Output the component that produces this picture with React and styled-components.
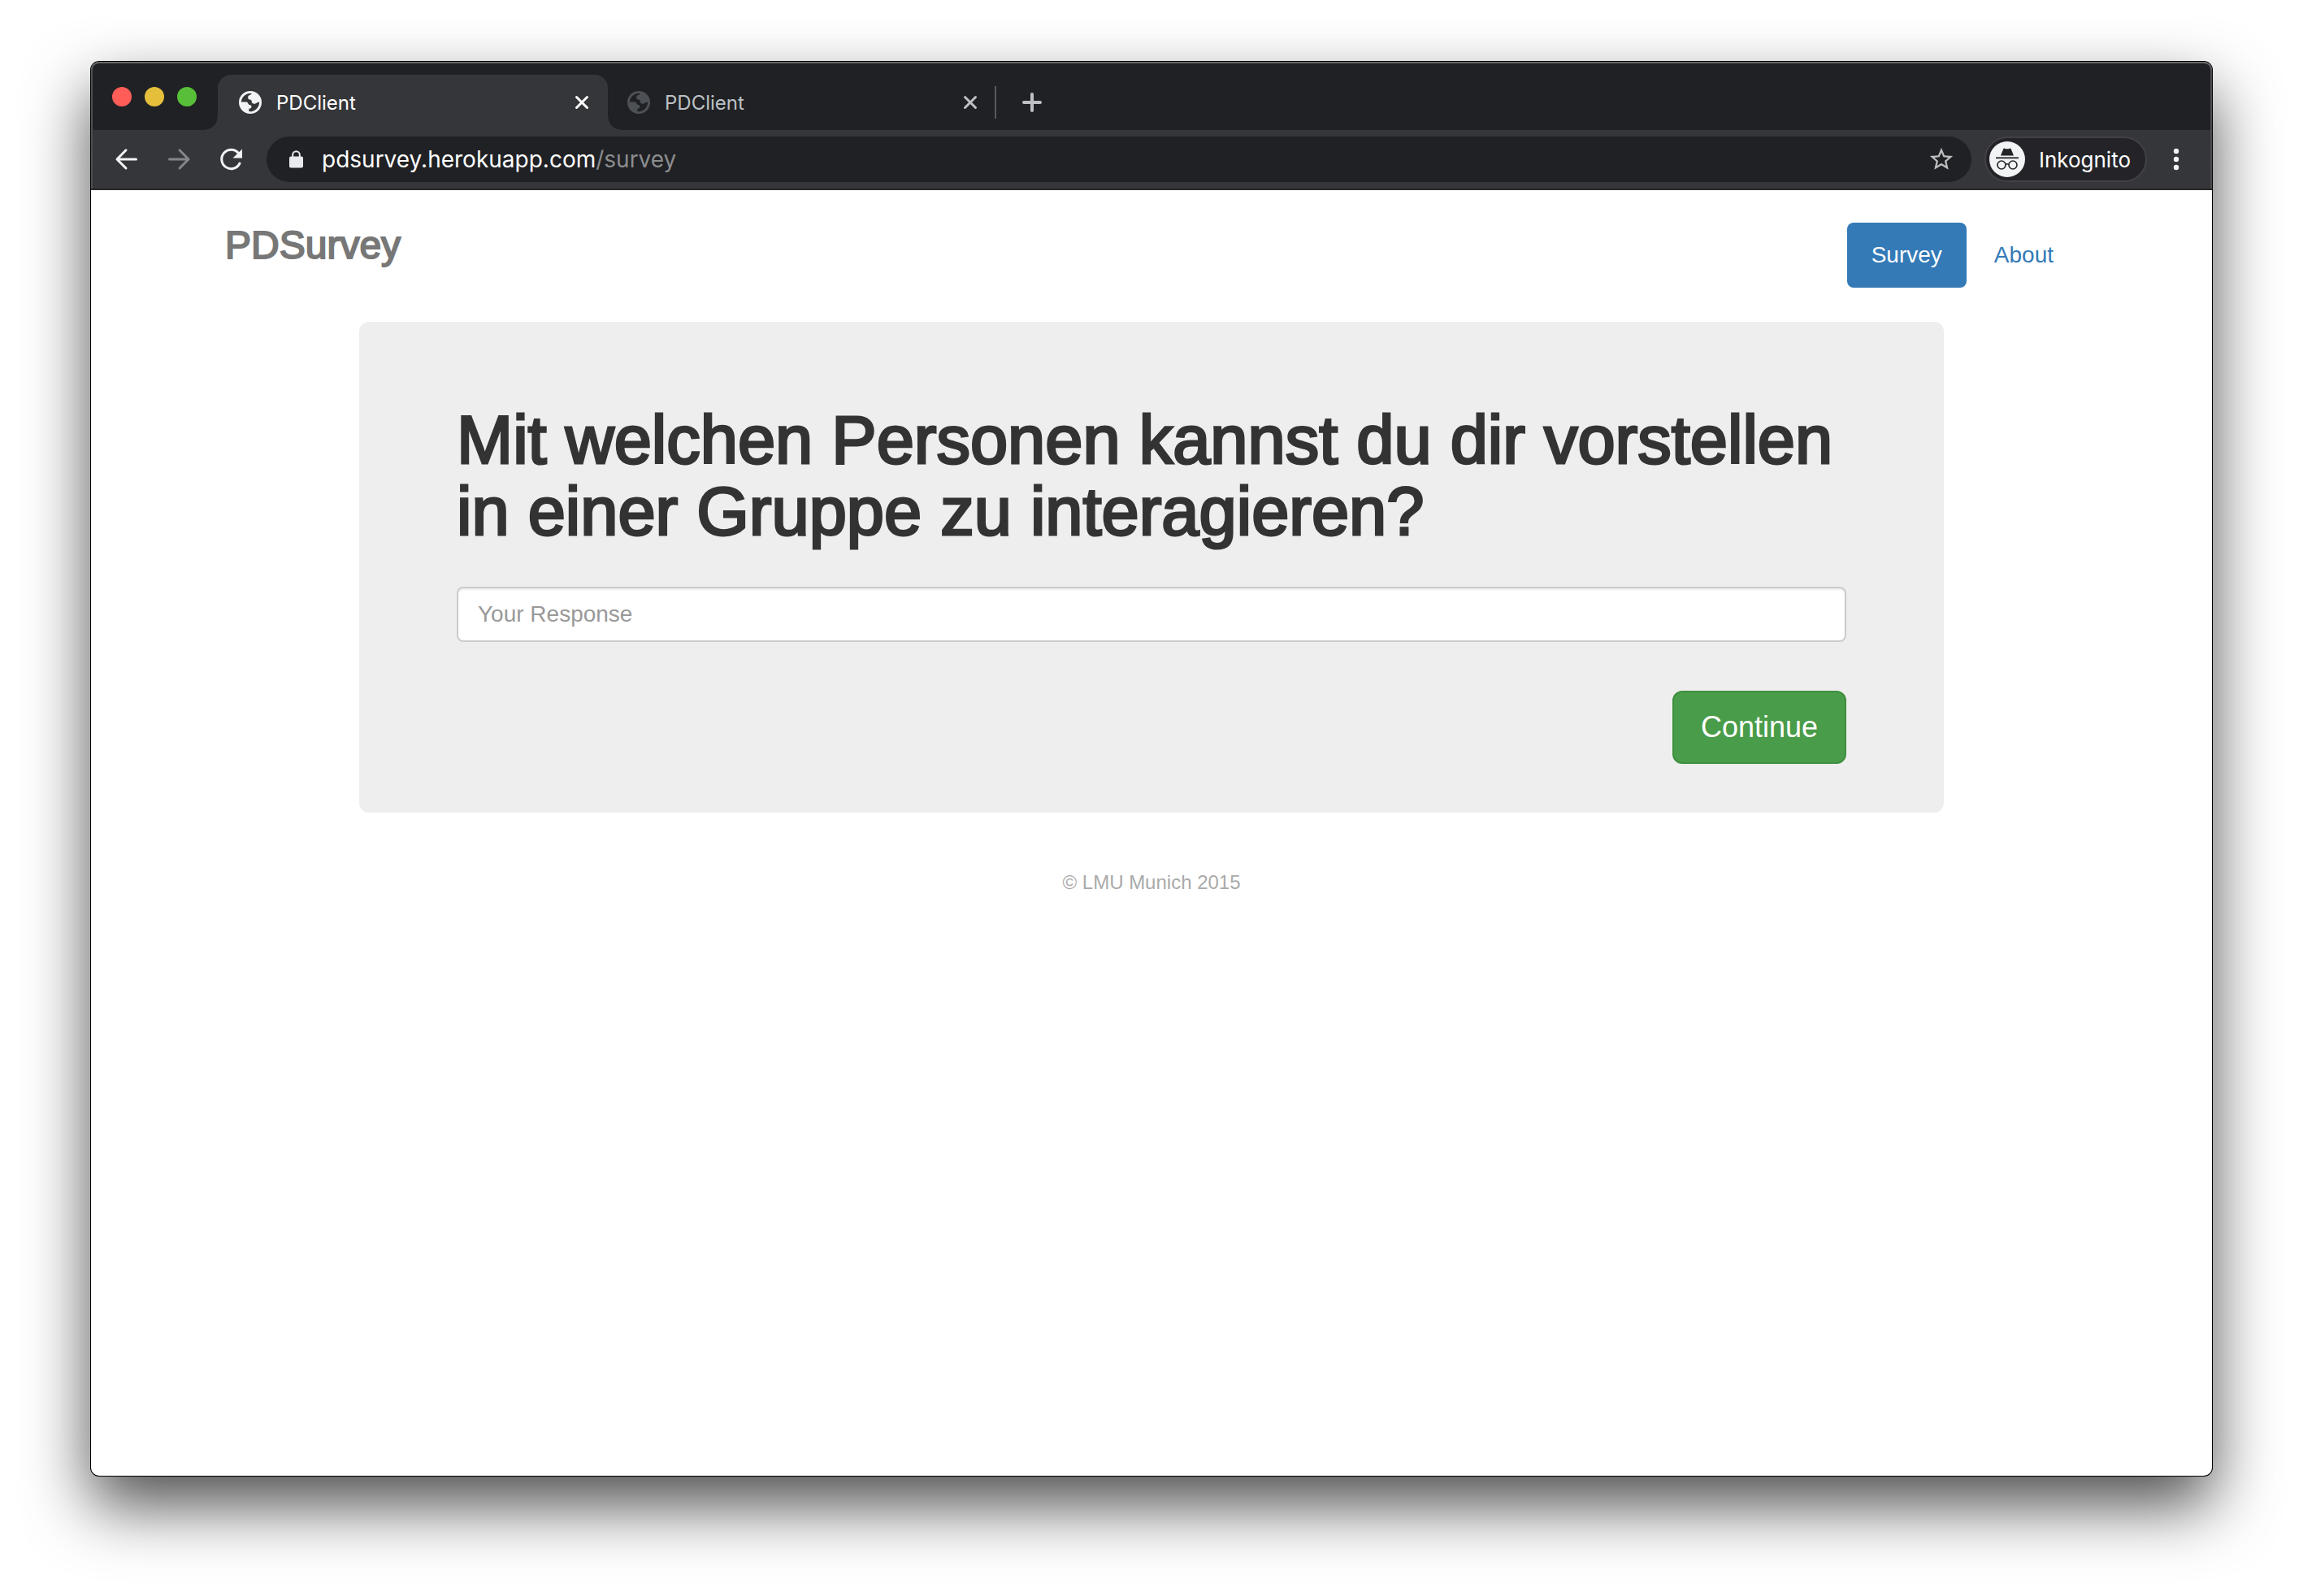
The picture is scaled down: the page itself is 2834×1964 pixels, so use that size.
import React from "react";
import styled, { createGlobalStyle } from "styled-components";

const ui = `Inter, Roboto, "Liberation Sans", sans-serif`;
const body = `"Liberation Sans", Arial, sans-serif`;

const GlobalStyle = createGlobalStyle`
  * { box-sizing: border-box; }
  body { margin: 0; background: #fff; font-family: ${body}; }
  button { padding: 0; border: 0; background: none; color: inherit; cursor: pointer; }
  svg { display: block; flex: none; }
`;

const Desktop = styled.div`
  display: flex;
  min-height: 100vh;
  padding: 76px 112px 148px;
  overflow: hidden;
`;

const Window = styled.div`
  flex: 1;
  min-width: 0;
  display: flex;
  flex-direction: column;
  border-radius: 10px;
  background: #fff;
  box-shadow: 0 0 0 1px #000, 0 36px 80px rgba(0, 0, 0, 0.7);
`;

const Chrome = styled.header`
  font-family: ${ui};
  color: #fff;
  border-radius: 10px 10px 0 0;
  background: #202124;
  border-bottom: 2px solid #29292b;
  box-shadow: inset 0 2px 0 #66686a, inset 2px 0 0 #4d4e50, inset -2px 0 0 #4d4e50;
`;

const TabStrip = styled.div`
  display: flex;
  align-items: flex-end;
  height: 84px;
  padding: 0 26px;
`;

const Lights = styled.div`
  display: flex;
  gap: 16px;
  width: 130px;
  padding-bottom: 29px;
`;

const Light = styled.button`
  width: 24px;
  height: 24px;
  && { background: ${(p) => p.$color}; }
  border-radius: 50%;
`;

const Tab = styled.div`
  position: relative;
  display: flex;
  align-items: center;
  width: 480px;
  height: 68px;
  padding: 0 22px 0 26px;
  border-radius: 16px 16px 0 0;
  font-size: 24px;
  background: ${(p) => (p.$active ? "#35363a" : "transparent")};
  color: ${(p) => (p.$active ? "#fff" : "#bdc1c6")};
  & + & { margin-left: -2px; }
  &::before, &::after {
    content: "";
    display: ${(p) => (p.$active ? "block" : "none")};
    position: absolute;
    bottom: 0;
    width: 16px;
    height: 16px;
  }
  &::before { right: 100%; background: radial-gradient(circle at 0 0, transparent 15px, #35363a 16px); }
  &::after { left: 100%; background: radial-gradient(circle at 100% 0, transparent 15px, #35363a 16px); }
`;

const TabTitle = styled.span`
  flex: 1;
  margin-left: 18px;
`;

const TabDivider = styled.span`
  width: 2px;
  height: 40px;
  margin: 0 30px 14px -2px;
  background: #58595c;
`;

const NewTab = styled.button`
  height: 68px;
  && { color: #bdc1c6; }
`;

const Toolbar = styled.div`
  display: flex;
  align-items: center;
  height: 72px;
  padding: 0 26px;
  margin: 0 2px;
  background: #35363a;
`;

const NavButtons = styled.div`
  display: flex;
  gap: 32px;
  margin-right: 28px;
`;

const Omnibox = styled.div`
  flex: 1;
  min-width: 0;
  display: flex;
  align-items: center;
  height: 56px;
  padding: 0 20px 0 28px;
  border-radius: 28px;
  background: #202124;
`;

const Url = styled.div`
  flex: 1;
  margin-left: 23px;
  font-size: 28px;
  white-space: nowrap;
  span { color: #8b8c8e; }
`;

const Profile = styled.button`
  display: flex;
  align-items: center;
  gap: 17px;
  height: 56px;
  && {
    margin: 0 22px 0 16px;
    padding: 0 18px 0 4px;
    border: 2px solid #414146;
    background: #242428;
    color: #fff;
  }
  border-radius: 28px;
  font: 26px ${ui};
`;

const Page = styled.div`
  width: 100%;
  max-width: 2280px;
  margin: 0 auto;
  padding-top: 40px;
`;

const PageHeader = styled.div`
  display: flex;
  justify-content: space-between;
  align-items: flex-start;
`;

const Brand = styled.h3`
  margin: 0;
  font-size: 48px;
  font-weight: 400;
  line-height: 56px;
  color: #777;
  -webkit-text-stroke: 2px #777;
`;

const Nav = styled.nav`
  display: flex;
  gap: 4px;
`;

const NavLink = styled.a`
  padding: 20px 30px;
  border-radius: 8px;
  font-size: 28px;
  line-height: 40px;
  text-decoration: none;
  background: ${(p) => (p.$active ? "#337ab7" : "transparent")};
  color: ${(p) => (p.$active ? "#fff" : "#337ab7")};
`;

const Jumbotron = styled.form`
  display: flex;
  flex-direction: column;
  max-width: 1950px;
  margin: 42px auto 0;
  padding: 102px 120px 60px;
  border-radius: 12px;
  background: #eee;
`;

const Question = styled.h1`
  margin: 0;
  font-size: 83px;
  font-weight: 400;
  line-height: 88px;
  color: #333;
  -webkit-text-stroke: 3px #333;
`;

const Answer = styled.input`
  height: 68px;
  margin-top: 48px;
  padding: 0 24px;
  border: 2px solid #ccc;
  border-radius: 8px;
  background: #fff;
  box-shadow: inset 0 2px 2px rgba(0, 0, 0, 0.075);
  font: 28px ${body};
  color: #555;
  &::placeholder { color: #999; opacity: 1; }
`;

const Continue = styled.button`
  align-self: flex-end;
  height: 90px;
  margin-top: 60px;
  && {
    padding: 0 33px;
    border: 2px solid #3e8f3e;
    background: #499c49;
    color: #fff;
  }
  border-radius: 12px;
  font: 36px ${body};
`;

const Footer = styled.footer`
  margin-top: 68px;
  text-align: center;
  font-size: 24px;
  line-height: 36px;
  color: #aaa;
`;

const Globe = ({ color }) => (
  <svg width="28" height="28" viewBox="2 2 20 20" fill={color}>
    <path
      fillRule="evenodd"
      d="M12 2a10 10 0 1 0 0 20 10 10 0 0 0 0-20zM4 11.7A8 8 0 0 1 13.2 4.1C13 5 12.200 5.300 11.300 5.600 10.400 5.900 10 6.500 10 7.400c0 .8.1 1.500.7 2 .6.4 1.500.2 2.100.6.8.5.2 1.700.7 2.400.6.900 2 .9 3 .6 1-.3 1.800-1.300 3.400-1.400A8 8 0 0 1 10.800 19.900V17.500c1.200.1 2.300-.5 2.300-1.700 0-1.100-.8-1.500-1.700-1.700-1.100-.2-1.100-1-1.500-1.600-.4-.6-1-.8-1.800-.8z"
    />
  </svg>
);

const Cross = () => (
  <svg width="20" height="20" viewBox="0 0 20 20" fill="none" stroke="currentColor" strokeWidth="3" strokeLinecap="round">
    <path d="M3.500 3.500l13 13M16.500 3.500l-13 13" />
  </svg>
);

const Arrow = ({ color, forward }) => (
  <svg width="32" height="32" viewBox="0 0 32 32" fill="none" stroke={color} strokeWidth="3" strokeLinecap="round" strokeLinejoin="round">
    <path d={forward ? "M4.500 16h23M17 4.800L28 16 17 27" : "M27.500 16h-23M15 4.800L4 16 15 27"} />
  </svg>
);

const Reload = () => (
  <svg width="32" height="32" viewBox="0 0 32 32">
    <path d="M27 21A11.700 11.700 0 1 1 25.500 8.500" fill="none" stroke="#f1f3f4" strokeWidth="3" strokeLinecap="round" />
    <path d="M30 3.500v11H18.500z" fill="#f1f3f4" />
  </svg>
);

const Lock = () => (
  <svg width="17" height="22" viewBox="0 0 17 22">
    <path d="M4.200 9V5.500a4.300 4.300 0 0 1 8.600 0V9" fill="none" stroke="#e8eaed" strokeWidth="2" />
    <rect y="7.500" width="17" height="14" rx="2" fill="#e8eaed" />
  </svg>
);

const Star = () => (
  <svg width="34" height="34" viewBox="0 0 24 24" fill="#bdbec0">
    <path d="M22 9.240l-7.190-.62L12 2 9.190 8.630 2 9.240l5.460 4.730L5.820 21 12 17.270 18.180 21l-1.630-7.030L22 9.240zM12 15.400l-3.760 2.270 1-4.280-3.320-2.880 4.380-.38L12 6.100l1.710 4.040 4.380.38-3.320 2.880 1 4.280L12 15.400z" />
  </svg>
);

const Incognito = () => (
  <svg width="44" height="44" viewBox="0 0 44 44">
    <circle cx="22" cy="22" r="22" fill="#f1f3f4" />
    <path d="M17.200 9.500c.3-1 .8-1.200 1.700-.8 2.100.8 4.100.8 6.200 0 .9-.4 1.500-.2 1.700.8L30 17.500H14z" fill="#242428" />
    <path d="M8 20.300h28" stroke="#242428" strokeWidth="1.800" />
    <g fill="none" stroke="#242428" strokeWidth="1.600">
      <circle cx="15" cy="29" r="5" />
      <circle cx="29" cy="29" r="5" />
      <path d="M20 28.500q2-1.500 4 0" />
    </g>
  </svg>
);

const Dots = () => (
  <svg width="30" height="32" viewBox="0 0 30 32" fill="#f1f3f4">
    <circle cx="14" cy="6" r="3.200" />
    <circle cx="14" cy="16" r="3.200" />
    <circle cx="14" cy="26" r="3.200" />
  </svg>
);

const BrowserTab = ({ active }) => (
  <Tab $active={active}>
    <Globe color={active ? "#f1f3f4" : "#4d5156"} />
    <TabTitle>PDClient</TabTitle>
    <button aria-label="Close tab"><Cross /></button>
  </Tab>
);

export default function App() {
  return (
    <>
      <GlobalStyle />
      <Desktop>
        <Window>
          <Chrome>
            <TabStrip>
              <Lights>
                <Light $color="#ff5d57" aria-label="Close" />
                <Light $color="#e5bf3c" aria-label="Minimize" />
                <Light $color="#58c038" aria-label="Zoom" />
              </Lights>
              <BrowserTab active />
              <BrowserTab />
              <TabDivider />
              <NewTab aria-label="New tab">
                <svg width="28" height="28" viewBox="0 0 28 28" stroke="currentColor" strokeWidth="4" strokeLinecap="round">
                  <path d="M14 4v20M4 14h20" />
                </svg>
              </NewTab>
            </TabStrip>
            <Toolbar>
              <NavButtons>
                <button aria-label="Back"><Arrow color="#f1f3f4" /></button>
                <button aria-label="Forward"><Arrow color="#858689" forward /></button>
                <button aria-label="Reload"><Reload /></button>
              </NavButtons>
              <Omnibox>
                <Lock />
                <Url>pdsurvey.herokuapp.com<span>/survey</span></Url>
                <button aria-label="Bookmark"><Star /></button>
              </Omnibox>
              <Profile><Incognito />Inkognito</Profile>
              <button aria-label="Menu"><Dots /></button>
            </Toolbar>
          </Chrome>
          <Page>
            <PageHeader>
              <Brand>PDSurvey</Brand>
              <Nav>
                <NavLink href="#survey" $active>Survey</NavLink>
                <NavLink href="#about">About</NavLink>
              </Nav>
            </PageHeader>
            <Jumbotron onSubmit={(e) => e.preventDefault()}>
              <Question>
                <label htmlFor="answer">Mit welchen Personen kannst du dir vorstellen in einer Gruppe zu interagieren?</label>
              </Question>
              <Answer id="answer" type="text" placeholder="Your Response" />
              <Continue type="submit">Continue</Continue>
            </Jumbotron>
            <Footer>© LMU Munich 2015</Footer>
          </Page>
        </Window>
      </Desktop>
    </>
  );
}
